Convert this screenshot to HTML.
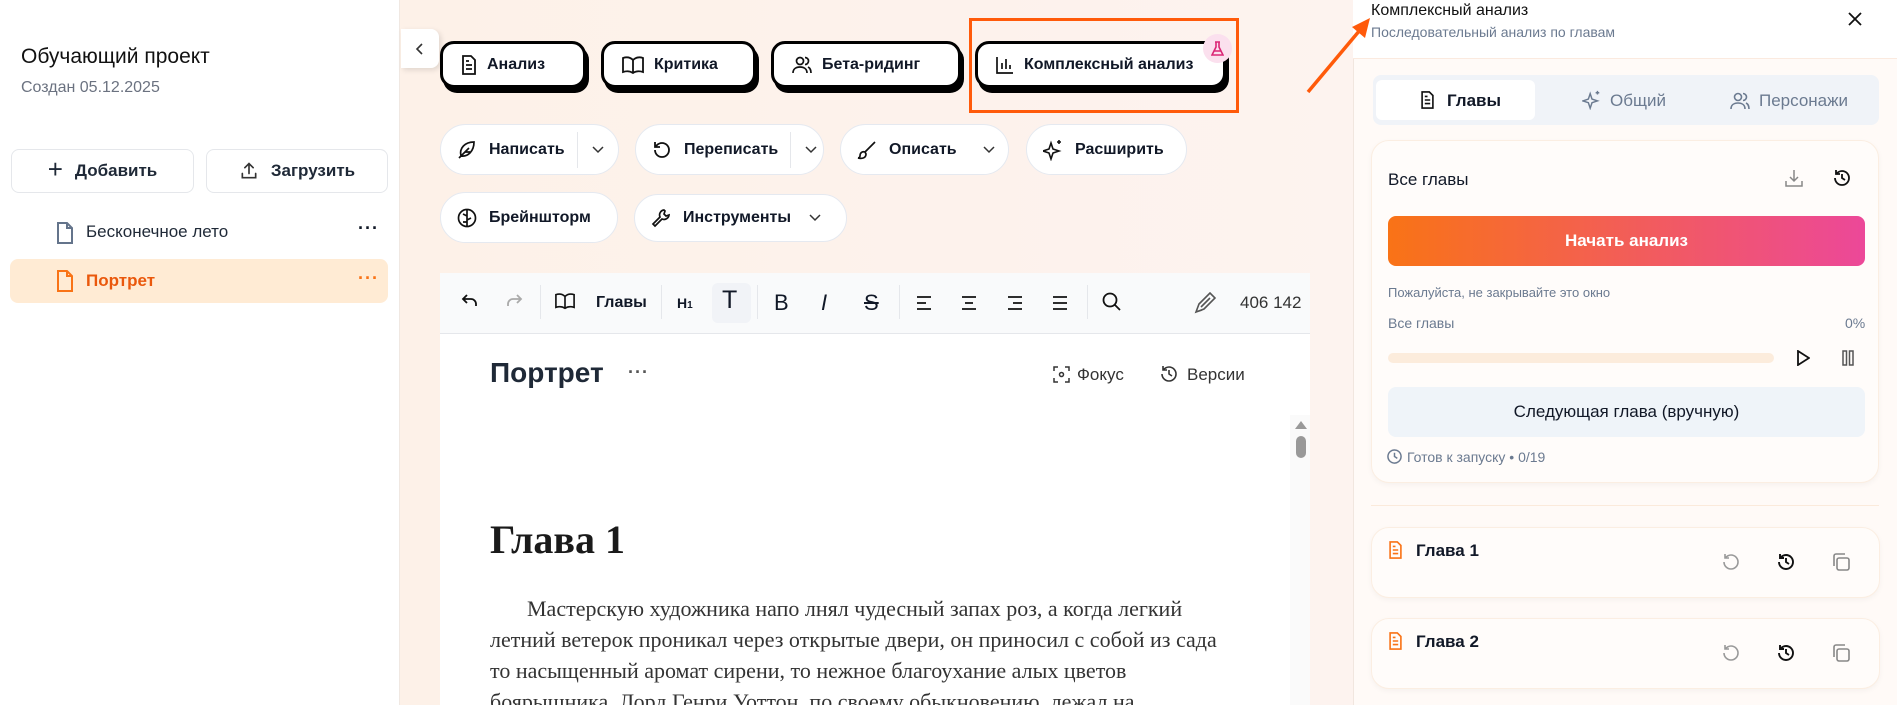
<!DOCTYPE html>
<html><head><meta charset="utf-8"><style>
*{box-sizing:border-box;margin:0;padding:0}
html,body{width:1897px;height:705px;overflow:hidden}
body{position:relative;font-family:"Liberation Sans","Noto Sans CJK SC",sans-serif;background:#fdf3ec;color:#111827}
.a{position:absolute}
svg{display:block;flex-shrink:0}
.side{left:0;top:0;width:400px;height:705px;background:#fff;border-right:1px solid #f0e8e2}
.main{left:400px;top:0;width:953px;height:705px;background:linear-gradient(90deg,#fdf1e8,#fdf3ef)}
.btn{position:absolute;background:#fff;border:1px solid #e5e7eb;border-radius:8px;display:flex;align-items:center;justify-content:center;gap:12px;font-size:17px;font-weight:600;color:#1f2937}
.big{position:absolute;background:#fff;border:3px solid #000;border-radius:14px;box-shadow:3px 5px 0 #000;display:flex;align-items:center;gap:10px;padding-left:18px;font-size:16px;font-weight:700;height:47px;top:41px}
.pill{position:absolute;background:#fff;border:1px solid #e5e9f0;border-radius:26px;display:flex;align-items:center;gap:12px;padding-left:16px;font-size:16px;font-weight:700;height:51px;white-space:nowrap}
.pill .dd{border-left:1px solid #e5e7eb;height:36px;display:flex;align-items:center;padding:0 14px;margin-left:auto}
.ti{position:absolute;top:292px}
.sep{position:absolute;top:285px;width:1px;height:34px;background:#e5e7eb}
.panel{left:1353px;top:0;width:544px;height:705px;background:#fffaf7;border-left:1px solid #f1e6df}
.card{position:absolute;background:#fffcfa;border:1px solid #fbeee2;border-radius:18px;box-shadow:0 2px 6px rgba(0,0,0,.04)}
p.t{font-family:"Liberation Serif",serif;font-size:22px;line-height:31px;color:#333;white-space:nowrap}
</style></head><body>
<div class="a side">
 <div class="a" style="left:21px;top:45px;font-size:21px;font-weight:500;color:#111">Обучающий проект</div>
 <div class="a" style="left:21px;top:79px;font-size:16px;color:#6b7280">Создан 05.12.2025</div>
 <div class="btn" style="left:11px;top:149px;width:183px;height:44px"><span style="font-size:26px;font-weight:300;margin-top:-3px">+</span>Добавить</div>
 <div class="btn" style="left:206px;top:149px;width:182px;height:44px"><svg width="20" height="20" viewBox="0 0 24 24" fill="none" stroke="#333" stroke-width="2" stroke-linecap="round"><path d="M12 15V3M7 8l5-5 5 5M4 15v5h16v-5"/></svg>Загрузить</div>
 <svg class="a" style="left:56px;top:221px" width="18" height="24" viewBox="0 0 18 24" fill="none" stroke="#64748b" stroke-width="2"><path d="M2 2h9l5 5v15H2z M11 2v5h5"/></svg>
 <div class="a" style="left:86px;top:222px;font-size:17px;color:#1f2937">Бесконечное лето</div>
 <div class="a" style="left:358px;top:218px;font-size:18px;font-weight:700;letter-spacing:1px">···</div>
 <div class="a" style="left:10px;top:259px;width:378px;height:44px;background:#ffebd4;border-radius:8px"></div>
 <svg class="a" style="left:56px;top:269px" width="18" height="24" viewBox="0 0 18 24" fill="none" stroke="#f97316" stroke-width="2"><path d="M2 2h9l5 5v15H2z M11 2v5h5"/></svg>
 <div class="a" style="left:86px;top:271px;font-size:17px;font-weight:600;color:#ea580c">Портрет</div>
 <div class="a" style="left:358px;top:268px;font-size:18px;font-weight:700;color:#f97316;letter-spacing:1px">···</div>
</div>
<div class="a main"></div>
<div class="a" style="left:401px;top:29px;width:38px;height:39px;background:#fff;border-radius:0 8px 8px 0;box-shadow:2px 2px 6px rgba(0,0,0,.12);display:flex;align-items:center;justify-content:center"><svg width="12" height="14" viewBox="0 0 12 14" fill="none" stroke="#333" stroke-width="1.6"><path d="M8 2L3 7l5 5"/></svg></div>

<div class="big" style="left:440px;width:146px"><svg width="16" height="20" viewBox="0 0 16 20" fill="none" stroke="#111" stroke-width="1.8"><path d="M2 1h8l4 4v14H2z M5 10h6M5 14h6M5 6h3"/></svg>Анализ</div>
<div class="big" style="left:601px;width:155px"><svg width="22" height="18" viewBox="0 0 22 18" fill="none" stroke="#111" stroke-width="1.8"><path d="M11 4C8 1 4 1 1 2v14c3-1 7-1 10 1 3-2 7-2 10-1V2c-3-1-7-1-10 2zM11 4v13"/></svg>Критика</div>
<div class="big" style="left:771px;width:190px"><svg width="20" height="20" viewBox="0 0 20 20" fill="none" stroke="#111" stroke-width="1.7"><circle cx="8" cy="6" r="3.5"/><path d="M1 18c0-4 3-6 7-6s7 2 7 6M13 2.5a3.5 3.5 0 010 7M16 12c2 1 3 3 3 6"/></svg>Бета-ридинг</div>
<div class="big" style="left:975px;width:251px"><svg width="18" height="18" viewBox="0 0 18 18" fill="none" stroke="#111" stroke-width="1.7"><path d="M1 1v16h16M6 13V7M10 13V3M14 13V9"/></svg>Комплексный анализ</div>
<div class="a" style="left:1203px;top:34px;width:29px;height:29px;border-radius:50%;background:#fbe0ee;display:flex;align-items:center;justify-content:center"><svg width="13" height="15" viewBox="0 0 13 15" fill="none" stroke="#db2777" stroke-width="1.6"><path d="M4 1h5M5 1v5L1 14h11L8 6V1M3 10h7"/></svg></div>
<div class="a" style="left:969px;top:18px;width:270px;height:95px;border:3px solid #ff5a0a"></div>

<div class="pill" style="left:440px;top:124px;width:179px"><svg width="20" height="20" viewBox="0 0 20 20" fill="none" stroke="#111" stroke-width="1.7"><path d="M2 18L12 8M4 16c-2-8 4-14 13-14 0 9-6 15-13 14zM8 12h5"/></svg>Написать<span class="dd"><svg width="12" height="8" viewBox="0 0 12 8" fill="none" stroke="#333" stroke-width="1.5"><path d="M1 1l5 5 5-5"/></svg></span></div>
<div class="pill" style="left:635px;top:124px;width:189px"><svg width="20" height="20" viewBox="0 0 20 20" fill="none" stroke="#111" stroke-width="1.8"><path d="M3 10a7 7 0 107-7c-2 0-4 1-5.5 2.5L3 7M3 2v5h5"/></svg>Переписать<span class="dd"><svg width="12" height="8" viewBox="0 0 12 8" fill="none" stroke="#333" stroke-width="1.5"><path d="M1 1l5 5 5-5"/></svg></span></div>
<div class="pill" style="left:840px;top:124px;width:169px"><svg width="20" height="20" viewBox="0 0 20 20" fill="none" stroke="#111" stroke-width="1.7"><path d="M18 2L8 12M8 12c-3-1-5 1-5 4 0 1-1 2-2 2 4 1 8 0 8-4z"/></svg>Описать<span class="dd" style="border:none"><svg width="12" height="8" viewBox="0 0 12 8" fill="none" stroke="#333" stroke-width="1.5"><path d="M1 1l5 5 5-5"/></svg></span></div>
<div class="pill" style="left:1026px;top:124px;width:161px"><svg width="20" height="22" viewBox="0 0 20 22" fill="none" stroke="#111" stroke-width="1.6"><path d="M8 4l2 6 6 2-6 2-2 6-2-6-6-2 6-2z M16 1v4M14 3h4"/></svg>Расширить</div>
<div class="pill" style="left:440px;top:192px;width:178px"><svg width="20" height="20" viewBox="0 0 20 20" fill="none" stroke="#111" stroke-width="1.7"><circle cx="10" cy="10" r="8.5"/><path d="M10 2v16M10 8l-4-2M10 12l4-2M6 14h4"/></svg>Брейншторм</div>
<div class="pill" style="left:634px;top:194px;width:213px;height:48px"><svg width="20" height="20" viewBox="0 0 20 20" fill="none" stroke="#111" stroke-width="1.7"><path d="M13 2a5 5 0 00-4 7L2 16l2 2 7-7a5 5 0 007-4l-3 1-2-2 1-3z"/></svg>Инструменты<span style="margin-left:6px"><svg width="12" height="8" viewBox="0 0 12 8" fill="none" stroke="#333" stroke-width="1.5"><path d="M1 1l5 5 5-5"/></svg></span></div>

<div class="a" style="left:440px;top:273px;width:870px;height:432px;background:#fff"></div>
<div class="a" style="left:440px;top:273px;width:870px;height:61px;background:#f9fafb;border-bottom:1px solid #e5e7eb"></div>
<svg class="ti" style="left:461px" width="18" height="18" viewBox="0 0 18 18" fill="none" stroke="#111" stroke-width="1.8"><path d="M6 3L2 7l4 4M2 7h8a5 5 0 015 5v2"/></svg>
<svg class="ti" style="left:505px" width="18" height="18" viewBox="0 0 18 18" fill="none" stroke="#aaa" stroke-width="1.8"><path d="M12 3l4 4-4 4M16 7H8a5 5 0 00-5 5v2"/></svg>
<div class="sep" style="left:540px"></div>
<svg class="ti" style="left:555px" width="20" height="18" viewBox="0 0 22 18" fill="none" stroke="#111" stroke-width="1.8"><path d="M11 4C8 1 4 1 1 2v14c3-1 7-1 10 1 3-2 7-2 10-1V2c-3-1-7-1-10 2zM11 4v13"/></svg>
<div class="a" style="left:596px;top:294px;font-size:16px;font-weight:700">Главы</div>
<div class="sep" style="left:661px"></div>
<div class="a" style="left:677px;top:295px;font-size:14px;font-weight:700">H<span style="font-size:10px">1</span></div>
<div class="a" style="left:712px;top:283px;width:39px;height:40px;background:#f1f3f7;border-radius:6px"></div>
<div class="a" style="left:722px;top:286px;font-size:25px;font-weight:300">T</div>
<div class="sep" style="left:757px"></div>
<div class="a" style="left:774px;top:290px;font-size:22px;font-weight:300">B</div>
<div class="a" style="left:821px;top:290px;font-size:22px;font-style:italic;font-weight:300">I</div>
<div class="a" style="left:864px;top:290px;font-size:22px;text-decoration:line-through;font-weight:300">S</div>
<div class="sep" style="left:899px"></div>
<svg class="ti" style="left:916px;top:296px" width="16" height="14" viewBox="0 0 16 14" stroke="#111" stroke-width="1.8"><path d="M1 1h14M1 7h9M1 13h14"/></svg>
<svg class="ti" style="left:961px;top:296px" width="16" height="14" viewBox="0 0 16 14" stroke="#111" stroke-width="1.8"><path d="M1 1h14M4 7h8M1 13h14"/></svg>
<svg class="ti" style="left:1007px;top:296px" width="16" height="14" viewBox="0 0 16 14" stroke="#111" stroke-width="1.8"><path d="M1 1h14M6 7h9M1 13h14"/></svg>
<svg class="ti" style="left:1052px;top:296px" width="16" height="14" viewBox="0 0 16 14" stroke="#111" stroke-width="1.8"><path d="M1 1h14M1 7h14M1 13h14"/></svg>
<div class="sep" style="left:1087px"></div>
<svg class="ti" style="left:1102px" width="19" height="19" viewBox="0 0 19 19" fill="none" stroke="#111" stroke-width="1.8"><circle cx="8" cy="8" r="6.5"/><path d="M13 13l5 5"/></svg>
<svg class="ti" style="left:1194px" width="22" height="22" viewBox="0 0 22 22" fill="none" stroke="#555" stroke-width="1.6"><path d="M2 20l3-8L16 1l5 5-11 11zM7 15l9-9M2 20l6-2"/></svg>
<div class="a" style="left:1240px;top:293px;font-size:17px;font-weight:500;color:#333">406 142</div>

<div class="a" style="left:490px;top:357px;font-size:28px;font-weight:600;color:#1f2937">Портрет</div>
<div class="a" style="left:628px;top:362px;font-size:18px;font-weight:700;color:#555;letter-spacing:1px">···</div>
<svg class="a" style="left:1053px;top:366px" width="17" height="17" viewBox="0 0 17 17" fill="none" stroke="#333" stroke-width="1.5"><path d="M1 5V1h4M12 1h4v4M16 12v4h-4M5 16H1v-4"/><circle cx="8.5" cy="8.5" r="2"/></svg>
<div class="a" style="left:1077px;top:365px;font-size:17px;font-weight:500;color:#333">Фокус</div>
<svg class="a" style="left:1160px;top:365px" width="18" height="18" viewBox="0 0 18 18" fill="none" stroke="#333" stroke-width="1.6"><path d="M2 9a7 7 0 107-7C6 2 4 4 3 5M3 1v4h4M9 5v4l3 2"/></svg>
<div class="a" style="left:1187px;top:365px;font-size:17px;font-weight:500;color:#333">Версии</div>
<div class="a" style="left:1290px;top:415px;width:20px;height:290px;background:#fafafa"></div>
<div class="a" style="left:1295px;top:421px;width:0;height:0;border-left:6px solid transparent;border-right:6px solid transparent;border-bottom:8px solid #999"></div>
<div class="a" style="left:1296px;top:436px;width:10px;height:22px;background:#999;border-radius:5px"></div>
<div class="a" style="left:490px;top:516px;font-family:'Liberation Serif',serif;font-size:40px;font-weight:700;color:#1a1a1a">Глава 1</div>
<p class="a t" style="left:490px;top:593px"><span style="display:inline-block;width:37px"></span>Мастерскую художника напо лнял чудесный запах роз, а когда легкий<br>летний ветерок проникал через открытые двери, он приносил с собой из сада<br>то насыщенный аромат сирени, то нежное благоухание алых цветов<br>боярышника. Лорд Генри Уоттон, по своему обыкновению, лежал на</p>

<div class="a panel"></div>
<div class="a" style="left:1353px;top:0;width:544px;height:59px;background:#fff;border-bottom:1px solid #fbeadf"></div>
<div class="a" style="left:1371px;top:2px;font-size:16px;font-weight:500;color:#111">Комплексный анализ</div>
<div class="a" style="left:1371px;top:24px;font-size:14px;color:#6b7a90">Последовательный анализ по главам</div>
<svg class="a" style="left:1848px;top:12px" width="14" height="14" viewBox="0 0 14 14" stroke="#111" stroke-width="1.8"><path d="M1 1l12 12M13 1L1 13"/></svg>
<div class="a" style="left:1373px;top:75px;width:506px;height:50px;background:#f0f3f8;border-radius:8px"></div>
<div class="a" style="left:1376px;top:80px;width:159px;height:40px;background:#fff;border-radius:6px"></div>
<svg class="a" style="left:1420px;top:91px" width="15" height="18" viewBox="0 0 16 20" fill="none" stroke="#111" stroke-width="1.8"><path d="M2 1h8l4 4v14H2z M5 10h6M5 14h6M5 6h3"/></svg>
<div class="a" style="left:1447px;top:91px;font-size:17px;font-weight:600">Главы</div>
<svg class="a" style="left:1582px;top:90px" width="20" height="20" viewBox="0 0 20 22" fill="none" stroke="#6b7a90" stroke-width="1.6"><path d="M8 4l2 6 6 2-6 2-2 6-2-6-6-2 6-2z M16 1v4M14 3h4"/></svg>
<div class="a" style="left:1610px;top:91px;font-size:17px;font-weight:500;color:#6b7a90">Общий</div>
<svg class="a" style="left:1730px;top:91px" width="20" height="20" viewBox="0 0 20 20" fill="none" stroke="#6b7a90" stroke-width="1.6"><circle cx="8" cy="6" r="3.5"/><path d="M1 18c0-4 3-6 7-6s7 2 7 6M13 2.5a3.5 3.5 0 010 7M16 12c2 1 3 3 3 6"/></svg>
<div class="a" style="left:1759px;top:91px;font-size:17px;font-weight:500;color:#6b7a90">Персонажи</div>

<div class="card" style="left:1371px;top:140px;width:508px;height:343px"></div>
<div class="a" style="left:1388px;top:170px;font-size:17px;font-weight:500">Все главы</div>
<svg class="a" style="left:1785px;top:169px" width="18" height="18" viewBox="0 0 18 18" fill="none" stroke="#888" stroke-width="1.5"><path d="M9 1v11M5 8l4 4 4-4M1 12v5h16v-5"/></svg>
<svg class="a" style="left:1833px;top:169px" width="18" height="18" viewBox="0 0 18 18" fill="none" stroke="#111" stroke-width="1.8"><path d="M2 9a7 7 0 107-7C6 2 4 4 3 5M3 1v4h4M9 5v4l3 2"/></svg>
<div class="a" style="left:1388px;top:216px;width:477px;height:50px;border-radius:8px;background:linear-gradient(90deg,#f97316,#ec4899);color:#fff;font-size:17px;font-weight:700;display:flex;align-items:center;justify-content:center">Начать анализ</div>
<div class="a" style="left:1388px;top:285px;font-size:13px;color:#6b7a90">Пожалуйста, не закрывайте это окно</div>
<div class="a" style="left:1388px;top:315px;font-size:14px;color:#6b7a90">Все главы</div>
<div class="a" style="left:1845px;top:315px;font-size:14px;color:#6b7a90">0%</div>
<div class="a" style="left:1388px;top:353px;width:386px;height:10px;border-radius:5px;background:#fcecdc"></div>
<svg class="a" style="left:1796px;top:350px" width="14" height="16" viewBox="0 0 14 16" fill="none" stroke="#111" stroke-width="1.8"><path d="M2 1l11 7-11 7z"/></svg>
<svg class="a" style="left:1842px;top:350px" width="12" height="16" viewBox="0 0 12 16" fill="none" stroke="#555" stroke-width="1.5"><rect x="1" y="1" width="3.5" height="14"/><rect x="7.5" y="1" width="3.5" height="14"/></svg>
<div class="a" style="left:1388px;top:387px;width:477px;height:50px;border-radius:8px;background:#eff4f9;font-size:17px;font-weight:500;display:flex;align-items:center;justify-content:center">Следующая глава (вручную)</div>
<svg class="a" style="left:1387px;top:449px" width="15" height="15" viewBox="0 0 16 16" fill="none" stroke="#6b7a90" stroke-width="1.6"><circle cx="8" cy="8" r="7"/><path d="M8 4v4l3 2"/></svg>
<div class="a" style="left:1407px;top:449px;font-size:14px;color:#6b7a90">Готов к запуску • 0/19</div>
<div class="a" style="left:1371px;top:505px;width:508px;height:1px;background:#fbeadb"></div>

<div class="card" style="left:1371px;top:527px;width:509px;height:71px"></div>
<svg class="a" style="left:1388px;top:541px" width="15" height="18" viewBox="0 0 16 20" fill="none" stroke="#f97316" stroke-width="1.8"><path d="M2 1h8l4 4v14H2z M5 10h6M5 14h6M5 6h3"/></svg>
<div class="a" style="left:1416px;top:541px;font-size:17px;font-weight:600">Глава 1</div>
<svg class="a" style="left:1722px;top:553px" width="18" height="18" viewBox="0 0 18 18" fill="none" stroke="#999" stroke-width="1.6"><path d="M2 9a7 7 0 107-7C6 2 4 4 3 5M3 1v4h4"/></svg>
<svg class="a" style="left:1777px;top:553px" width="18" height="18" viewBox="0 0 18 18" fill="none" stroke="#111" stroke-width="1.9"><path d="M2 9a7 7 0 107-7C6 2 4 4 3 5M3 1v4h4M9 5v4l3 2"/></svg>
<svg class="a" style="left:1832px;top:553px" width="18" height="18" viewBox="0 0 18 18" fill="none" stroke="#888" stroke-width="1.6"><rect x="5" y="5" width="12" height="12" rx="2"/><path d="M2 13V3a2 2 0 012-2h9"/></svg>
<div class="card" style="left:1371px;top:618px;width:509px;height:71px"></div>
<svg class="a" style="left:1388px;top:632px" width="15" height="18" viewBox="0 0 16 20" fill="none" stroke="#f97316" stroke-width="1.8"><path d="M2 1h8l4 4v14H2z M5 10h6M5 14h6M5 6h3"/></svg>
<div class="a" style="left:1416px;top:632px;font-size:17px;font-weight:600">Глава 2</div>
<svg class="a" style="left:1722px;top:644px" width="18" height="18" viewBox="0 0 18 18" fill="none" stroke="#999" stroke-width="1.6"><path d="M2 9a7 7 0 107-7C6 2 4 4 3 5M3 1v4h4"/></svg>
<svg class="a" style="left:1777px;top:644px" width="18" height="18" viewBox="0 0 18 18" fill="none" stroke="#111" stroke-width="1.9"><path d="M2 9a7 7 0 107-7C6 2 4 4 3 5M3 1v4h4M9 5v4l3 2"/></svg>
<svg class="a" style="left:1832px;top:644px" width="18" height="18" viewBox="0 0 18 18" fill="none" stroke="#888" stroke-width="1.6"><rect x="5" y="5" width="12" height="12" rx="2"/><path d="M2 13V3a2 2 0 012-2h9"/></svg>

<svg class="a" style="left:1300px;top:10px;z-index:10" width="80" height="86" viewBox="0 0 80 86"><path d="M8 82L60 20" stroke="#ff5a0a" stroke-width="3.5"/><path d="M70 8L52 17l13 11z" fill="#ff5a0a"/></svg>
</body></html>
